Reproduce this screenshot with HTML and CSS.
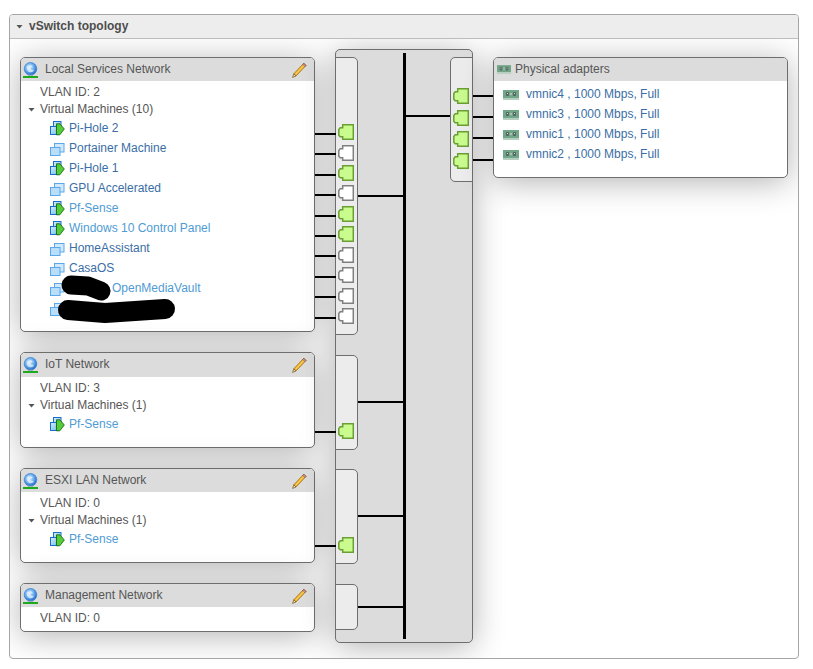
FILE: index.html
```html
<!DOCTYPE html>
<html lang="en">
<head>
<meta charset="utf-8">
<title>vSwitch topology</title>
<link rel="stylesheet" href="styles.css">
</head>
<body>
<svg class="defs" width="0" height="0" aria-hidden="true">
  <defs>
    <radialGradient id="gl" cx=".42" cy=".38" r=".62"><stop offset="0" stop-color="#d4ebfc"/><stop offset=".55" stop-color="#6fb0ee"/><stop offset="1" stop-color="#1f68c8"/></radialGradient>
    <linearGradient id="vmf" x1="0" y1="0" x2="1" y2="1"><stop offset="0" stop-color="#d8eefc"/><stop offset="1" stop-color="#6dbbec"/></linearGradient>
    <symbol id="globe" viewBox="0 0 15 16">
      <circle cx="7.500" cy="6.800" r="6.300" fill="url(#gl)" stroke="#3d86d6" stroke-width=".8"/>
      <path d="M4 4.200C6 3 8.500 3.200 9.800 4.200 9 5.600 7.600 5.400 7 6.500 8 7.800 10 7.600 11 8.800 9.500 10.500 6.500 10.600 5 9.200 4 8 3.500 5.800 4 4.200Z" fill="#e6f2fc" opacity=".75"/>
      <rect x="5" y="12.800" width="5" height="1.200" fill="#9ab0b8"/>
      <rect x="0" y="14" width="15" height="2" fill="#1eaa1e"/>
    </symbol>
    <symbol id="pencil" viewBox="0 0 15 16">
      <path d="M11.800 1.200 14 3.400 4 14 1.800 11.800Z" fill="#f3b32d" stroke="#9c6f1c" stroke-width=".8"/>
      <path d="M11.800 1.200 14 3.400 12.900 4.600 10.700 2.400Z" fill="#dc9292" stroke="#7e5a5a" stroke-width=".8"/>
      <path d="M1.800 11.800 4 14 .6 15.400Z" fill="#f4dfb0" stroke="#7e6228" stroke-width=".8"/>
      <path d="M3.800 12 11.800 3.600" stroke="#fbe08a" stroke-width=".8" fill="none"/>
    </symbol>
    <symbol id="nic" viewBox="0 0 16 10">
      <rect x="0" y="0" width="16" height="8" fill="#72a688"/>
      <rect x="3" y="2" width="3" height="4" fill="#5a6a66"/>
      <rect x="10" y="2" width="3" height="4" fill="#5a6a66"/>
      <rect x="4" y="3" width="1" height="1" fill="#c6d4cc"/>
      <rect x="11" y="3" width="1" height="1" fill="#c6d4cc"/>
      <rect x="7" y="3" width="2" height="2" fill="#a8c4b4"/>
      <rect x="0" y="8" width="16" height="2" fill="#b4cfbf"/>
    </symbol>
    <symbol id="vm-on" viewBox="0 0 15 15">
      <rect x="3.500" y=".5" width="7.500" height="8" fill="url(#vmf)" stroke="#1a6ecb"/>
      <rect x=".5" y="5.500" width="7.500" height="8" fill="url(#vmf)" stroke="#1a6ecb"/>
      <path d="M6.500 2.800H9.800L14.300 8 9.800 13.800H6.500Z" fill="#56cc3a" stroke="#146b10" stroke-width=".9"/>
    </symbol>
    <symbol id="vm-off" viewBox="0 0 15 15">
      <rect x="4.500" y="2.500" width="9.500" height="8.500" fill="#cfe8fb" stroke="#5aa8ea"/>
      <rect x=".5" y="6.500" width="9.500" height="8" fill="#b9defa" stroke="#5aa8ea"/>
    </symbol>
    <symbol id="port" viewBox="0 0 16 16">
      <path d="M4.700 .8H15.300V15.200H4.700V12.700H2.200L.8 11.200V5.500L2.200 3.800H4.700Z" fill="inherit" stroke="inherit" stroke-width="1.500"/>
    </symbol>
  </defs>
</svg>

<section class="panel">
  <header class="panel-head"><span class="caret caret-head"></span><h2 class="panel-title">vSwitch topology</h2></header>
  <div class="topology">

    <div class="networks">
      <article class="card">
        <div class="card-head"><svg class="ico-globe"><use href="#globe"/></svg><span class="card-title">Local Services Network</span><svg class="ico-pencil"><use href="#pencil"/></svg></div>
        <div class="card-body">
          <div class="meta">VLAN ID: 2</div>
          <div class="tree"><span class="caret"></span>Virtual Machines (10)</div>
          <ul class="vms">
            <li class="vm"><svg class="ico-vm"><use href="#vm-on"/></svg><a class="link">Pi-Hole 2</a></li>
            <li class="vm"><svg class="ico-vm"><use href="#vm-off"/></svg><a class="link">Portainer Machine</a></li>
            <li class="vm"><svg class="ico-vm"><use href="#vm-on"/></svg><a class="link">Pi-Hole 1</a></li>
            <li class="vm"><svg class="ico-vm"><use href="#vm-off"/></svg><a class="link">GPU Accelerated</a></li>
            <li class="vm"><svg class="ico-vm"><use href="#vm-on"/></svg><a class="link link-light">Pf-Sense</a></li>
            <li class="vm"><svg class="ico-vm"><use href="#vm-on"/></svg><a class="link link-light">Windows 10 Control Panel</a></li>
            <li class="vm"><svg class="ico-vm"><use href="#vm-off"/></svg><a class="link">HomeAssistant</a></li>
            <li class="vm"><svg class="ico-vm"><use href="#vm-off"/></svg><a class="link">CasaOS</a></li>
            <li class="vm"><svg class="ico-vm"><use href="#vm-off"/></svg><a class="link link-light link-masked">OpenMediaVault</a></li>
            <li class="vm"><svg class="ico-vm"><use href="#vm-off"/></svg></li>
          </ul>
        </div>
      </article>

      <article class="card card-iot">
        <div class="card-head"><svg class="ico-globe"><use href="#globe"/></svg><span class="card-title">IoT Network</span><svg class="ico-pencil"><use href="#pencil"/></svg></div>
        <div class="card-body">
          <div class="meta">VLAN ID: 3</div>
          <div class="tree"><span class="caret"></span>Virtual Machines (1)</div>
          <ul class="vms">
            <li class="vm"><svg class="ico-vm"><use href="#vm-on"/></svg><a class="link link-light">Pf-Sense</a></li>
          </ul>
        </div>
      </article>

      <article class="card">
        <div class="card-head"><svg class="ico-globe"><use href="#globe"/></svg><span class="card-title">ESXI LAN Network</span><svg class="ico-pencil"><use href="#pencil"/></svg></div>
        <div class="card-body">
          <div class="meta">VLAN ID: 0</div>
          <div class="tree"><span class="caret"></span>Virtual Machines (1)</div>
          <ul class="vms">
            <li class="vm"><svg class="ico-vm"><use href="#vm-on"/></svg><a class="link link-light">Pf-Sense</a></li>
          </ul>
        </div>
      </article>

      <article class="card">
        <div class="card-head"><svg class="ico-globe"><use href="#globe"/></svg><span class="card-title">Management Network</span><svg class="ico-pencil"><use href="#pencil"/></svg></div>
        <div class="card-body card-body-short">
          <div class="meta">VLAN ID: 0</div>
        </div>
      </article>
    </div>

    <div class="switch">
      <div class="port-groups">
        <div class="group group-local">
          <svg class="port on"><use href="#port"/></svg>
          <svg class="port"><use href="#port"/></svg>
          <svg class="port on"><use href="#port"/></svg>
          <svg class="port"><use href="#port"/></svg>
          <svg class="port on"><use href="#port"/></svg>
          <svg class="port on"><use href="#port"/></svg>
          <svg class="port"><use href="#port"/></svg>
          <svg class="port"><use href="#port"/></svg>
          <svg class="port"><use href="#port"/></svg>
          <svg class="port"><use href="#port"/></svg>
        </div>
        <div class="group group-iot"><svg class="port on"><use href="#port"/></svg></div>
        <div class="group group-esxi"><svg class="port on"><use href="#port"/></svg></div>
        <div class="group group-mgmt"></div>
      </div>
      <div class="group-uplink">
        <svg class="port on"><use href="#port"/></svg>
        <svg class="port on"><use href="#port"/></svg>
        <svg class="port on"><use href="#port"/></svg>
        <svg class="port on"><use href="#port"/></svg>
      </div>
    </div>

    <article class="card card-adapters">
      <div class="card-head"><svg class="ico-nic-head"><use href="#nic"/></svg><span class="card-title">Physical adapters</span></div>
      <ul class="nics">
        <li class="nic"><svg class="ico-nic"><use href="#nic"/></svg><a class="link">vmnic4 , 1000 Mbps, Full</a></li>
        <li class="nic"><svg class="ico-nic"><use href="#nic"/></svg><a class="link">vmnic3 , 1000 Mbps, Full</a></li>
        <li class="nic"><svg class="ico-nic"><use href="#nic"/></svg><a class="link">vmnic1 , 1000 Mbps, Full</a></li>
        <li class="nic"><svg class="ico-nic"><use href="#nic"/></svg><a class="link">vmnic2 , 1000 Mbps, Full</a></li>
      </ul>
    </article>
  </div>
</section>

<svg class="wires" viewBox="0 0 813 669" aria-hidden="true">
  <g class="wire">
    <path d="M315 134H336M315 154H336M315 175H336M315 195H336M315 216H336M315 236H336M315 256H336M315 277H336M315 297H336M315 318H336M315 432H336M315 546H336"/>
    <path d="M358 196H404M358 402H404M358 516H404M358 607H404M404 116H450"/>
    <path d="M473 96H493M473 117H493M473 138H493M473 160H493"/>
  </g>
  <path class="bus" d="M404.500 53V639"/>
  <g class="mask">
    <path d="M71 285L88 286 101 291" stroke-width="19"/>
    <path d="M68 310L105 313 165 309" stroke-width="20"/>
  </g>
</svg>
</body>
</html>
```

FILE: styles.css
```css
* { box-sizing: border-box; }

html, body { margin: 0; padding: 0; }

body {
  width: 813px;
  height: 669px;
  background: #fff;
  font: 12px/17px "Liberation Sans", Arial, sans-serif;
  color: #565656;
  overflow: hidden;
  position: relative;
}

.defs { position: absolute; }

.panel {
  width: 790px;
  height: 645px;
  margin: 14px 0 0 9px;
  border: 1px solid #a6a6a6;
  border-radius: 4px;
  background: #fff;
  overflow: hidden;
}

.panel-head {
  height: 24px;
  display: flex;
  align-items: center;
  padding-left: 6px;
  background: #ededed;
  border-bottom: 1px solid #bdbdbd;
  position: relative;
  z-index: 1;
}

.panel-title {
  margin: 0 0 0 6px;
  font-size: 12px;
  font-weight: bold;
  color: #4d4d4d;
}

.caret {
  display: inline-block;
  flex: none;
  width: 7px;
  height: 4px;
  background: #555;
  clip-path: polygon(0 0, 100% 0, 50% 100%);
}

.topology {
  display: flex;
  align-items: flex-start;
  gap: 20px;
  padding: 18px 10px 0;
}

.networks {
  width: 295px;
  display: flex;
  flex-direction: column;
  gap: 20px;
  flex: none;
}

.card {
  background: #fff;
  border: 1px solid #6e6e6e;
  border-radius: 5px;
  box-shadow: 0 4px 32px rgba(0, 0, 0, .3);
  overflow: hidden;
}

.card-head {
  height: 23px;
  display: flex;
  align-items: center;
  background: #dcdcdc;
  padding-left: 2px;
}

.card-title { margin-left: 7px; color: #565656; }

.ico-globe { width: 15px; height: 16px; flex: none; }

.ico-pencil { width: 15px; height: 16px; margin-left: auto; margin-right: 7px; flex: none; }

.card-body { padding: 3px 0 13px; }

.card-iot .card-head { height: 24px; }

.card-iot .card-title { margin-top: -1px; }

.card-body-short { padding-bottom: 4px; }

.meta { padding-left: 19px; }

.tree { display: flex; align-items: center; padding-left: 7px; }

.tree .caret { margin-right: 5px; }

.vms, .nics { list-style: none; margin: 0; padding: 0; }

.vm { height: 20px; display: flex; align-items: center; padding-left: 29px; }

.ico-vm { width: 15px; height: 15px; flex: none; }

.link { margin-left: 4px; color: #3a6ea5; }

.link-light { color: #4f9bd4; }

.link-masked { margin-left: 47px; }

.switch {
  width: 138px;
  height: 594px;
  margin-top: -8px;
  flex: none;
  display: flex;
  justify-content: space-between;
  align-items: flex-start;
  background: #dcdcdc;
  border: 1px solid #6e6e6e;
  border-radius: 5px;
  box-shadow: 0 4px 32px rgba(0, 0, 0, .3);
  padding-top: 7px;
}

.port-groups {
  display: flex;
  flex-direction: column;
  margin-left: -1px;
}

.group {
  width: 23px;
  display: flex;
  flex-direction: column;
  justify-content: flex-end;
  gap: 4.440px;
  padding: 0 0 10px 2px;
  background: #ececec;
  border: 1px solid #6e6e6e;
  border-radius: 0 5px 5px 0;
}

.group-local { height: 278px; }
.group-iot { height: 95px; margin-top: 20px; }
.group-esxi { height: 95px; margin-top: 19px; }
.group-mgmt { height: 46px; margin-top: 20px; }

.group-uplink {
  width: 23px;
  height: 125px;
  margin-right: -1px;
  display: flex;
  flex-direction: column;
  justify-content: flex-end;
  gap: 5.670px;
  padding: 0 0 12px 2px;
  background: #ececec;
  border: 1px solid #6e6e6e;
  border-radius: 5px 0 0 5px;
}

.port {
  width: 16px;
  height: 16px;
  flex: none;
  fill: #fff;
  stroke: #808080;
}

.port.on {
  fill: #c9fb8e;
  stroke: #6a9f33;
}

.card-adapters { width: 295px; height: 121px; flex: none; }

.ico-nic-head { width: 14px; height: 9px; flex: none; margin-left: 1px; }

.card-adapters .card-title { margin-left: 4px; }

.nics { padding-top: 3px; }

.nic { height: 20px; display: flex; align-items: center; padding-left: 9px; }

.ico-nic { width: 16px; height: 10px; flex: none; margin-top: 2px; }

.nic .link { margin-left: 7px; }

.wires {
  position: absolute;
  left: 0;
  top: 0;
  width: 813px;
  height: 669px;
  pointer-events: none;
}

.wire path { fill: none; stroke: #000; stroke-width: 2; }

.bus { fill: none; stroke: #000; stroke-width: 3; }

.mask path { fill: none; stroke: #000; stroke-linecap: round; stroke-linejoin: round; }
```
